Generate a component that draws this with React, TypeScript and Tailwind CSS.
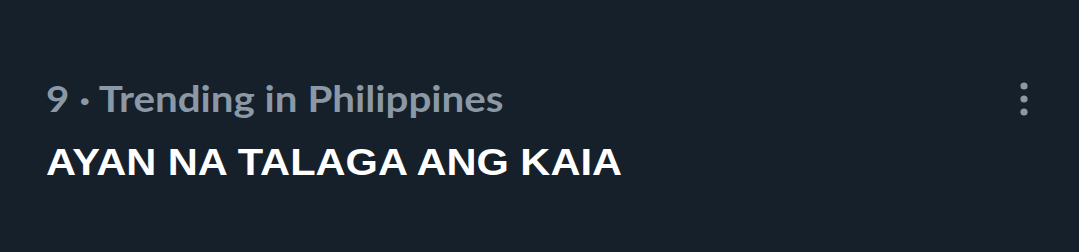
import React from 'react';

function MoreIcon() {
  return (
    <svg viewBox="0 0 10 40" className="h-[40px] w-[10px]" fill="#8b98a5">
      <circle cx="5" cy="6" r="3.6" />
      <circle cx="5" cy="19" r="3.6" />
      <circle cx="5" cy="32" r="3.6" />
    </svg>
  );
}

export default function App() {
  return (
    <div className="h-[252px] w-[1079px] bg-[#15202b] overflow-hidden">
      <div className="flex items-start justify-between pl-[46px] pr-[50px] pt-[76px]">
        <div className="flex flex-col">
          <div className="origin-left scale-x-[1.12] whitespace-nowrap text-[36px] leading-[44px] font-bold text-[#8b98a5] font-['Lato',sans-serif]">
            9 · Trending in Philippines
          </div>
          <div className="mt-[21px] origin-left scale-x-[1.155] whitespace-nowrap text-[36px] leading-[44px] font-bold text-white font-['Liberation_Sans',Arial,sans-serif]">
            AYAN NA TALAGA ANG KAIA
          </div>
        </div>
        <div className="pt-[4px]">
          <MoreIcon />
        </div>
      </div>
    </div>
  );
}
